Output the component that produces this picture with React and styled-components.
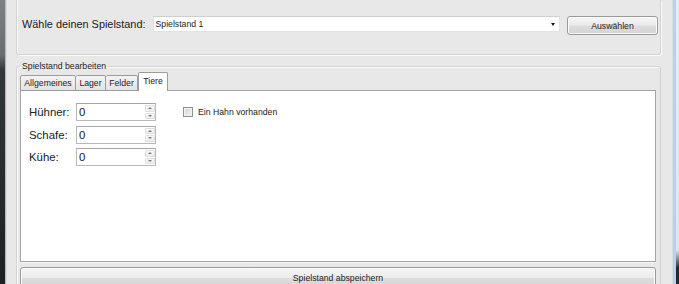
import React from "react";
import styled, { createGlobalStyle } from "styled-components";

const GlobalStyle = createGlobalStyle`
  *, *::before, *::after {
    box-sizing: border-box;
  }
  html, body {
    margin: 0;
    padding: 0;
    background: #e8e8e8;
  }
  body {
    font-family: "Liberation Sans", Arial, sans-serif;
    color: #1e1e1e;
  }
`;

const Window = styled.div`
  display: flex;
  width: 679px;
  height: 284px;
  overflow: hidden;
`;

const LeftFrame = styled.div`
  width: 7px;
  flex: none;
  background: linear-gradient(
      to right,
      transparent 5px,
      #b9b9b9 5px,
      #b9b9b9 6px,
      #dcdcdc 6px
    ),
    linear-gradient(to bottom, #7c8186, #686d72 55px, #32373c 70px, #1d2125);
`;

const RightFrame = styled.div`
  width: 6px;
  flex: none;
  background: linear-gradient(to right, #b9d1eb 0 3px, transparent 3px),
    linear-gradient(to bottom, #e6edf6, #dce6f2 250px, #1f2a38 268px);
`;

const Form = styled.div`
  flex: 1;
  display: flex;
  flex-direction: column;
  padding: 0 11px 0 9px;
  background: #e8e8e8;
  border-right: 1px solid #dcdcdc;
`;

const TopGroup = styled.div`
  height: 55px;
  flex: none;
  display: flex;
  align-items: flex-start;
  gap: 7px;
  padding: 16px 2px 0 5px;
  border: 1px solid #d2d2d2;
  border-top: none;
  border-radius: 0 0 3px 3px;
  box-shadow: 1px 1px 0 #fafafa, inset 1px 0 0 #fafafa;
`;

const BigLabel = styled.span`
  font-size: 10.9px;
  line-height: 16px;
  white-space: nowrap;
  color: #202020;
`;

const Combo = styled.div`
  flex: 1;
  height: 16px;
  display: flex;
  align-items: center;
  justify-content: space-between;
  padding: 0 4px 0 2px;
  background: #fff;
  border: 1px solid #e2e2e2;
  border-top-color: #cfcfcf;
  font-size: 8.7px;
`;

const Arrow = styled.span`
  width: 0;
  height: 0;
  border-left: 2.5px solid transparent;
  border-right: 2.5px solid transparent;
  border-top: 3px solid #111;
`;

const Button = styled.button`
  width: ${(p) => p.$w || "auto"};
  height: ${(p) => p.$h || "19px"};
  padding: 0;
  font-family: "Liberation Sans", Arial, sans-serif;
  font-size: 8.7px;
  color: #222;
  border: 1px solid #9a9a9a;
  border-radius: 3px;
  background: linear-gradient(to bottom, #f6f6f6 0%, #ebebeb 48%, #dddddd 52%, #d4d4d4 100%);
  box-shadow: inset 0 0 0 1px #fbfbfb;
`;

const EditGroup = styled.fieldset`
  margin: 6px 0 0 0;
  padding: 0 4px 0 3px;
  border: 1px solid #d2d2d2;
  border-radius: 3px;
  box-shadow: inset 1px 1px 0 #fafafa;
  min-width: 0;
`;

const Legend = styled.legend`
  padding: 0 2px;
  font-size: 8.7px;
  line-height: 11px;
  color: #222;
`;

const TabRow = styled.div`
  display: flex;
  align-items: flex-end;
  height: 19px;
  position: relative;
  z-index: 1;
`;

const Tab = styled.div`
  width: ${(p) => p.$w}px;
  height: ${(p) => (p.$active ? 19 : 16)}px;
  display: flex;
  align-items: center;
  justify-content: center;
  font-size: 8.7px;
  color: #222;
  border: 1px solid #9c9c9c;
  border-bottom: ${(p) => (p.$active ? "none" : "1px solid #9c9c9c")};
  border-left: ${(p) => (p.$first || p.$active ? "1px solid #9c9c9c" : "none")};
  border-radius: 2px 2px 0 0;
  background: ${(p) =>
    p.$active ? "#fff" : "linear-gradient(to bottom, #f3f3f3, #e3e3e3)"};
  padding-bottom: ${(p) => (p.$active ? "2px" : "0")};
`;

const TabPanel = styled.div`
  height: 172px;
  margin-top: -1px;
  display: flex;
  align-items: flex-start;
  padding: 12px 8px;
  background: #fff;
  border: 1px solid #a4a4a4;
  box-shadow: 0 1px 0 #f4f4f4;
`;

const FieldGrid = styled.div`
  display: grid;
  grid-template-columns: 47px 80px;
  row-gap: 4.5px;
  align-items: center;
`;

const FieldLabel = styled.span`
  font-size: 11.4px;
  color: #202020;
`;

const Spin = styled.div`
  height: 18px;
  display: flex;
  border: 1px solid #b5b8bd;
  border-top-color: #a3a6ab;
  background: #fff;
`;

const SpinValue = styled.span`
  flex: 1;
  font-size: 11.4px;
  line-height: 16px;
  padding-left: 2px;
  color: #202020;
`;

const SpinButtons = styled.div`
  width: 10px;
  display: flex;
  flex-direction: column;
  gap: 1px;
  padding: 1px 0;
`;

const SpinBtn = styled.div`
  flex: 1;
  display: flex;
  align-items: center;
  justify-content: center;
  border: 1px solid #e0e0e0;
  border-radius: 1px;
  background: linear-gradient(to bottom, #f8f8f8, #ececec);

  &::after {
    content: "";
    border-left: 2px solid transparent;
    border-right: 2px solid transparent;
    ${(p) => (p.$up ? "border-bottom: 2px solid #7a7a7a;" : "border-top: 2px solid #7a7a7a;")}
  }
`;

const CheckRow = styled.label`
  display: flex;
  align-items: center;
  gap: 5px;
  height: 18px;
  margin-left: 27px;
  font-size: 8.7px;
  color: #222;
`;

const CheckBox = styled.span`
  width: 10px;
  height: 10px;
  border: 1px solid #8f9091;
  background: linear-gradient(135deg, #d4d4d4, #f4f4f4);
  box-shadow: inset 0 0 0 1px #f2f2f2;
`;

const SaveRow = styled.div`
  margin-top: 5px;
  display: flex;
`;

const fields = ["Hühner:", "Schafe:", "Kühe:"];
const tabs = [
  { name: "Allgemeines", w: 56 },
  { name: "Lager", w: 30 },
  { name: "Felder", w: 32 },
  { name: "Tiere", w: 30, active: true },
];

export default function App() {
  return (
    <>
      <GlobalStyle />
      <Window>
        <LeftFrame />
        <Form>
          <TopGroup>
            <BigLabel>Wähle deinen Spielstand:</BigLabel>
            <Combo>
              <span>Spielstand 1</span>
              <Arrow />
            </Combo>
            <Button $w="91px">Auswählen</Button>
          </TopGroup>
          <EditGroup>
            <Legend>Spielstand bearbeiten</Legend>
            <TabRow>
              {tabs.map((t, i) => (
                <Tab key={t.name} $w={t.w} $active={t.active} $first={i === 0}>
                  {t.name}
                </Tab>
              ))}
            </TabRow>
            <TabPanel>
              <FieldGrid>
                {fields.map((f) => (
                  <React.Fragment key={f}>
                    <FieldLabel>{f}</FieldLabel>
                    <Spin>
                      <SpinValue>0</SpinValue>
                      <SpinButtons>
                        <SpinBtn $up />
                        <SpinBtn />
                      </SpinButtons>
                    </Spin>
                  </React.Fragment>
                ))}
              </FieldGrid>
              <CheckRow>
                <CheckBox />
                Ein Hahn vorhanden
              </CheckRow>
            </TabPanel>
            <SaveRow>
              <Button $w="100%" $h="22px">Spielstand abspeichern</Button>
            </SaveRow>
          </EditGroup>
        </Form>
        <RightFrame />
      </Window>
    </>
  );
}
